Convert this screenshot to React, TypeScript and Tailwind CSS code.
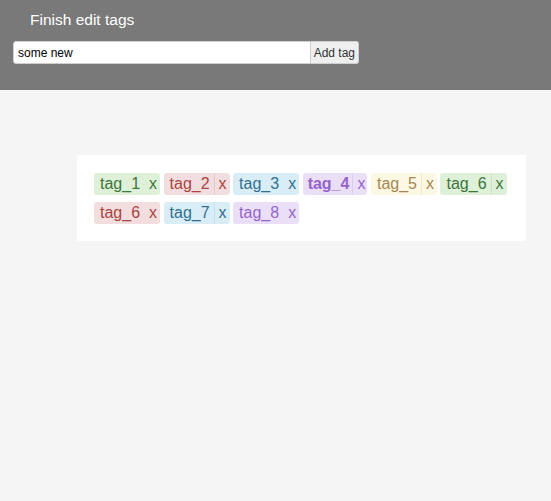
import React from "react";

type Tag = { label: string; bg: string; fg: string; div: string; bold?: boolean };

const tags: Tag[][] = [
  [
    { label: "tag_1", bg: "bg-[#dff0d8]", fg: "text-[#3c763d]", div: "border-[#dff0d8]" },
    { label: "tag_2", bg: "bg-[#f2dede]", fg: "text-[#a94442]", div: "border-[#e6c9c9]" },
    { label: "tag_3", bg: "bg-[#d9edf7]", fg: "text-[#31708f]", div: "border-[#d9edf7]" },
    { label: "tag_4", bg: "bg-[#ebdff8]", fg: "text-[#9563c9]", div: "border-[#dccbee]", bold: true },
    { label: "tag_5", bg: "bg-[#fcf8e3]", fg: "text-[#a58655]", div: "border-[#efe6cc]" },
    { label: "tag_6", bg: "bg-[#dff0d8]", fg: "text-[#3c763d]", div: "border-[#cce3c3]" },
  ],
  [
    { label: "tag_6", bg: "bg-[#f2dede]", fg: "text-[#a94442]", div: "border-[#f2dede]" },
    { label: "tag_7", bg: "bg-[#d9edf7]", fg: "text-[#31708f]", div: "border-[#c3dfec]" },
    { label: "tag_8", bg: "bg-[#ebdff8]", fg: "text-[#9563c9]", div: "border-[#ebdff8]" },
  ],
];

function TagChip({ t }: { t: Tag }) {
  return (
    <div className={`flex h-[22px] items-stretch rounded-[3px] ${t.bg} ${t.fg} text-[16px] leading-[22px]`}>
      {t.bold ? (
        <span className="pl-[5px] pr-[3px] font-bold">{t.label}</span>
      ) : (
        <span className="pl-[6px] pr-[4px]">{t.label}</span>
      )}
      <span className={`border-l ${t.div} pl-[4px] ${t.bold ? "pr-[2px]" : "pr-[3px]"}`}>x</span>
    </div>
  );
}

export default function App() {
  return (
    <div className="min-h-[501px] bg-[#f5f5f5]" style={{ fontFamily: '"Liberation Sans", Arial, sans-serif' }}>
      <div className="h-[90px] bg-[#797979]">
        <div className="pl-[30px] pt-[11px] text-[15.5px] leading-[18px] text-white">Finish edit tags</div>
        <div className="ml-[13px] mt-[12px] flex h-[23px] w-[346px]">
          <div className="flex flex-1 items-center rounded-l-[3px] border border-[#cfcfcf] bg-white pl-[4px] text-[12px] text-black">
            some new
          </div>
          <div className="flex items-center rounded-r-[3px] border border-l-0 border-[#cfcfcf] bg-[#efefef] px-[3px] text-[12px] text-[#333]">
            Add tag
          </div>
        </div>
      </div>
      <div className="ml-[77px] mt-[65px] w-[449px] bg-white pb-[17px] pl-[17px] pr-[10px] pt-[18px]">
        <div className="flex flex-col gap-[7px]">
          {tags.map((row, i) => (
            <div key={i} className="flex gap-[3.5px]">
              {row.map((t, j) => (
                <TagChip key={j} t={t} />
              ))}
            </div>
          ))}
        </div>
      </div>
    </div>
  );
}
